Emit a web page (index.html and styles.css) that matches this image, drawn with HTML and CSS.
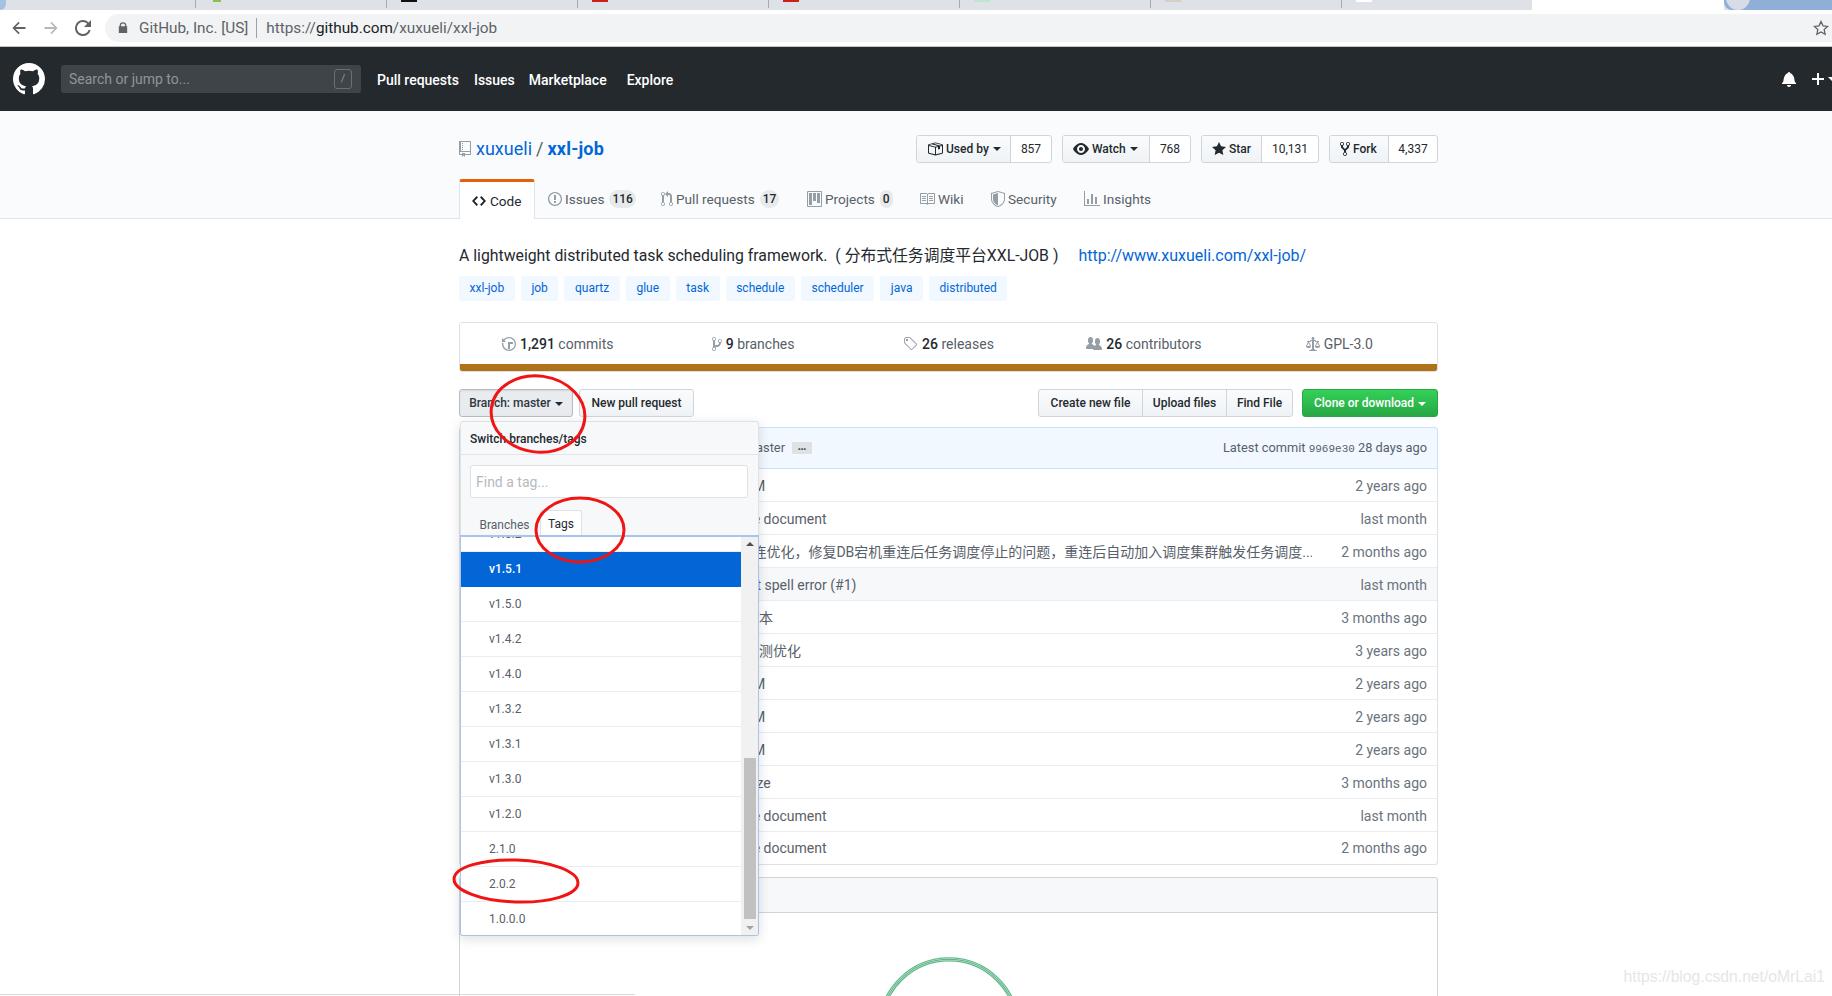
FILE: index.html
```html
<!DOCTYPE html>
<html lang="en">
<head>
<meta charset="utf-8">
<title>xuxueli/xxl-job</title>
<link rel="stylesheet" href="styles.css">
</head>
<body>
<div class="tabstrip">
  <span class="corner"></span>
  <span class="ctab t1"></span>
  <span class="ctab t2"><i class="fav green"></i></span>
  <span class="ctab t2"><i class="fav black"></i></span>
  <span class="ctab t2"><i class="fav red"></i></span>
  <span class="ctab t2"><i class="fav red"></i></span>
  <span class="ctab t2"><i class="fav mint"></i></span>
  <span class="ctab t2"><i class="fav tan"></i></span>
  <span class="ctab t3"><i class="fav white"></i></span>
  <span class="active-tab"></span>
  <span class="profile"><i class="avatar"></i></span>
</div>
<div class="toolbar">
  <svg class="nav-ico" viewBox="0 0 16 16"><path d="M14.5 7H4.6l4.1-4.1L7.5 1.8 1.4 8l6.1 6.2 1.2-1.1L4.6 9h9.9z"/></svg>
  <svg class="nav-ico off" viewBox="0 0 16 16"><path d="M1.5 7h9.9L7.3 2.9l1.2-1.1L14.6 8l-6.1 6.2-1.2-1.1L11.4 9H1.500z"/></svg>
  <svg class="nav-ico reload" viewBox="0 0 16 16"><path d="M13.6 2.4A7.9 7.900 0 0 0 8 0a8 8 0 1 0 7.700 10h-2.100A6 6 0 1 1 8 2c1.700 0 3.100.7 4.200 1.800L9 7h7V0z"/></svg>
  <div class="omnibox">
    <svg class="lock" viewBox="0 0 12 14"><path d="M10 5V4a4 4 0 0 0-8 0v1H1v8h10V5zM3.500 5V4a2.500 2.500 0 0 1 5 0v1z"/></svg>
    <span class="issuer">GitHub, Inc. [US]</span>
    <span class="omni-sep"></span>
    <span class="url">https://<b>github.com</b>/xuxueli/xxl-job</span>
    <svg class="bookmark" viewBox="0 0 16 16"><path fill="none" stroke="#5f6368" stroke-width="1.300" d="M8 1.500l2 4.300 4.700.6-3.500 3.200.9 4.700L8 12l-4.100 2.300.9-4.700L1.300 6.400 6 5.800z"/></svg>
  </div>
</div>
<header class="ghead">
  <svg class="logo" viewBox="0 0 16 16"><path d="M8 0C3.580 0 0 3.580 0 8c0 3.540 2.290 6.530 5.470 7.590.4.070.55-.17.55-.38 0-.19-.01-.82-.01-1.490-2.010.37-2.530-.49-2.690-.94-.09-.23-.48-.94-.82-1.130-.28-.15-.68-.52-.01-.53.63-.01 1.080.58 1.230.82.72 1.210 1.870.87 2.330.66.07-.52.28-.87.51-1.070-1.780-.2-3.640-.89-3.640-3.950 0-.87.31-1.590.82-2.150-.08-.2-.36-1.020.08-2.120 0 0 .67-.21 2.200.82.64-.18 1.320-.27 2-.27.68 0 1.360.09 2 .27 1.530-1.040 2.200-.82 2.200-.82.44 1.100.16 1.920.08 2.120.51.56.82 1.270.82 2.150 0 3.070-1.870 3.750-3.650 3.950.29.25.54.73.54 1.480 0 1.070-.01 1.930-.01 2.200 0 .21.15.46.55.38A8.013 8.013 0 0016 8c0-4.420-3.580-8-8-8z"/></svg>
  <div class="search"><span>Search or jump to...</span><kbd>/</kbd></div>
  <nav class="gnav">
    <a>Pull requests</a><a>Issues</a><a>Marketplace</a><a>Explore</a>
  </nav>
  <div class="ghead-right">
    <svg class="bell" viewBox="0 0 14 16"><path d="M14 12v1H0v-1l.73-.58c.77-.77.81-2.550 1.190-4.420C2.690 3.230 6 2 6 2c0-.55.45-1 1-1s1 .45 1 1c0 0 3.390 1.230 4.160 5 .38 1.880.42 3.660 1.190 4.420l.66.58H14zm-7 4c1.110 0 2-.89 2-2H5c0 1.110.89 2 2 2z"/></svg>
    <svg class="plus" viewBox="0 0 12 16"><path d="M12 9H7v5H5V9H0V7h5V2h2v5h5v2z"/></svg>
    <i class="caret white-caret"></i>
  </div>
</header>
<section class="pagehead">
  <div class="wrap">
    <div class="repo-row">
      <h1 class="repo-title">
        <svg class="ico repo-ico" viewBox="0 0 12 16"><path d="M4 9H3V8h1v1zm0-3H3v1h1V6zm0-2H3v1h1V4zm0-2H3v1h1V2zm8-1v12c0 .55-.45 1-1 1H6v2l-1.500-1.500L3 16v-2H1c-.55 0-1-.45-1-1V1c0-.55.45-1 1-1h10c.55 0 1 .45 1 1zm-1 10H1v2h2v-1h3v1h5v-2zm0-10H2v9h9V1z"/></svg>
        <a>xuxueli</a><span class="slash">/</span><a class="strong">xxl-job</a>
      </h1>
      <ul class="actions">
        <li class="act a-used"><span class="act-btn"><svg class="ico dark" viewBox="0 0 16 16"><path d="M1 4.270v7.470c0 .45.3.84.75.97l6.500 1.730c.16.050.34.050.5 0l6.500-1.730c.45-.13.75-.52.75-.97V4.270c0-.45-.3-.84-.75-.97l-6.500-1.740a1.400 1.400 0 00-.5 0L1.750 3.300c-.45.13-.75.52-.75.97zm7 9.090l-6-1.590V5l6 1.610v6.750zM2 4l2.500-.67L11 5.060l-2.500.67L2 4zm13 7.770l-6 1.590V6.610l2-.55V8.500l2-.53V5.530L15 5v6.770zm-2-7.240L6.500 2.800l2-.53L15 4l-2 .53z"/></svg>Used by<i class="caret"></i></span><span class="act-count">857</span></li>
        <li class="act a-watch"><span class="act-btn"><svg class="ico dark" viewBox="0 0 16 16"><path d="M8.060 2C3 2 0 8 0 8s3 6 8.060 6C13 14 16 8 16 8s-3-6-7.940-6zM8 12c-2.200 0-4-1.780-4-4 0-2.200 1.800-4 4-4 2.220 0 4 1.800 4 4 0 2.220-1.780 4-4 4zm2-4c0 1.110-.89 2-2 2-1.110 0-2-.89-2-2 0-1.110.89-2 2-2 1.110 0 2 .89 2 2z"/></svg>Watch<i class="caret"></i></span><span class="act-count">768</span></li>
        <li class="act a-star"><span class="act-btn"><svg class="ico dark" viewBox="0 0 14 16"><path d="M14 6l-4.900-.64L7 1 4.900 5.360 0 6l3.600 3.260L2.670 14 7 11.670 11.330 14l-.93-4.740L14 6z"/></svg>Star</span><span class="act-count">10,131</span></li>
        <li class="act a-fork"><span class="act-btn"><svg class="ico dark" viewBox="0 0 10 16"><path d="M8 1a1.993 1.993 0 00-1 3.720V6L5 8 3 6V4.720A1.993 1.993 0 002 1a1.993 1.993 0 00-1 3.720V6.500l3 3v1.780A1.993 1.993 0 005 15a1.993 1.993 0 001-3.720V9.500l3-3V4.720A1.993 1.993 0 008 1zM2 4.200C1.340 4.200.8 3.650.8 3c0-.65.55-1.200 1.200-1.200.65 0 1.200.55 1.200 1.200 0 .65-.55 1.200-1.200 1.200zm3 10c-.66 0-1.200-.55-1.200-1.200 0-.65.55-1.200 1.200-1.200.65 0 1.200.55 1.200 1.200 0 .65-.55 1.200-1.200 1.200zm3-10c-.66 0-1.200-.55-1.200-1.200 0-.65.55-1.200 1.200-1.200.65 0 1.200.55 1.200 1.200 0 .65-.55 1.200-1.200 1.200z"/></svg>Fork</span><span class="act-count">4,337</span></li>
      </ul>
    </div>
    <nav class="rtabs">
      <a class="rtab selected"><svg class="ico dark" viewBox="0 0 14 16"><path d="M9.500 3L8 4.500 11.500 8 8 11.500 9.500 13 14 8 9.500 3zm-5 0L0 8l4.500 5L6 11.500 2.500 8 6 4.500 4.500 3z"/></svg>Code</a>
      <a class="rtab w-issues"><svg class="ico" viewBox="0 0 14 16"><path d="M7 2.300c3.140 0 5.700 2.560 5.700 5.700s-2.560 5.700-5.700 5.700A5.710 5.710 0 011.300 8c0-3.140 2.560-5.700 5.700-5.700zM7 1C3.140 1 0 4.140 0 8s3.140 7 7 7 7-3.140 7-7-3.140-7-7-7zm1 3H6v5h2V4zm0 6H6v2h2v-2z"/></svg>Issues<span class="counter">116</span></a>
      <a class="rtab w-pulls"><svg class="ico" viewBox="0 0 12 16"><path d="M11 11.280V5c-.03-.78-.34-1.470-.94-2.060C9.460 2.350 8.780 2.030 8 2H7V0L4 3l3 3V4h1c.27.020.48.11.69.31.21.2.3.42.31.69v6.280A1.993 1.993 0 0010 15a1.993 1.993 0 001-3.720zm-1 2.920c-.66 0-1.200-.55-1.200-1.200 0-.65.55-1.200 1.200-1.200.65 0 1.200.55 1.200 1.200 0 .65-.55 1.200-1.200 1.200zM4 3c0-1.110-.89-2-2-2a1.993 1.993 0 00-1 3.720v6.560A1.993 1.993 0 002 15a1.993 1.993 0 001-3.720V4.720c.59-.34 1-.98 1-1.720zm-.8 10c0 .66-.55 1.200-1.200 1.200-.65 0-1.200-.55-1.200-1.200 0-.65.55-1.200 1.200-1.200.65 0 1.200.55 1.200 1.200zM2 4.200C1.340 4.200.8 3.650.8 3c0-.65.55-1.200 1.200-1.200.65 0 1.200.55 1.200 1.200 0 .65-.55 1.200-1.200 1.200z"/></svg>Pull requests<span class="counter">17</span></a>
      <a class="rtab w-proj"><svg class="ico" viewBox="0 0 15 16"><path fill-rule="evenodd" d="M10 12h3V2h-3v10zm-4-2h3V2H6v8zm-4 4h3V2H2v12zm-1 1h13V1H1v14zM14 0H1a1 1 0 00-1 1v14a1 1 0 001 1h13a1 1 0 001-1V1a1 1 0 00-1-1z"/></svg>Projects<span class="counter">0</span></a>
      <a class="rtab w-wiki"><svg class="ico" viewBox="0 0 16 16"><path d="M3 5h4v1H3V5zm0 3h4V7H3v1zm0 2h4V9H3v1zm11-5h-4v1h4V5zm0 2h-4v1h4V7zm0 2h-4v1h4V9zm2-6v9c0 .55-.45 1-1 1H9.500l-1 1-1-1H2c-.55 0-1-.45-1-1V3c0-.55.45-1 1-1h5.500l1 1 1-1H15c.55 0 1 .45 1 1zm-8 .5L7.500 3H2v9h6V3.500zm7-.5H9.500l-.5.5V12h6V3z"/></svg>Wiki</a>
      <a class="rtab w-sec"><svg class="ico" viewBox="0 0 14 16"><path fill-rule="evenodd" d="M0 2l7-2 7 2v6.020C14 12.690 8.690 16 7 16c-1.690 0-7-3.310-7-7.980V2zm1 .75L7 1l6 1.750v5.268C13 12.104 8.449 15 7 15c-1.449 0-6-2.896-6-6.982V2.750zm1 .75L7 2v12c-1.207 0-5-2.414-5-5.818V3.500z"/></svg>Security</a>
      <a class="rtab"><svg class="ico" viewBox="0 0 16 16"><path d="M16 14v1H0V0h1v14h15zM5 13H3V8h2v5zm4 0H7V3h2v10zm4 0h-2V6h2v7z"/></svg>Insights</a>
    </nav>
  </div>
</section>
<main class="wrap">
  <p class="desc"><span>A lightweight distributed task scheduling framework. &nbsp;(&nbsp;分布式任务调度平台XXL-JOB&nbsp;)</span><a class="homepage">http://www.xuxueli.com/xxl-job/</a></p>
  <div class="topics">
    <a>xxl-job</a><a>job</a><a>quartz</a><a>glue</a><a>task</a><a>schedule</a><a>scheduler</a><a>java</a><a>distributed</a>
  </div>
  <div class="summary">
    <ul class="stats">
      <li><svg class="ico" viewBox="0 0 14 16"><path d="M8 13H6V6h5v2H8v5zM7 1C4.810 1 2.870 2.020 1.590 3.590L0 2v4h4L2.500 4.500C3.550 3.170 5.170 2.300 7 2.300c3.140 0 5.700 2.560 5.700 5.700s-2.560 5.700-5.700 5.700A5.710 5.710 0 011.300 8c0-.34.030-.67.090-1H.08C.030 7.330 0 7.660 0 8c0 3.860 3.140 7 7 7s7-3.140 7-7-3.140-7-7-7z"/></svg><span><b>1,291</b> commits</span></li>
      <li><svg class="ico" viewBox="0 0 10 16"><path d="M10 5c0-1.110-.89-2-2-2a1.993 1.993 0 00-1 3.720v.3c-.020.52-.23.98-.63 1.380-.4.4-.86.61-1.380.63-.83.020-1.480.16-2 .45V4.720a1.993 1.993 0 00-1-3.720C.88 1 0 1.890 0 3a2 2 0 001 1.720v6.560c-.59.35-1 .99-1 1.720 0 1.110.89 2 2 2 1.110 0 2-.89 2-2 0-.53-.2-1-.53-1.360.090-.060.48-.41.59-.47.25-.11.56-.17.94-.17 1.050-.050 1.950-.45 2.750-1.250S8.950 7.770 9 6.730h-.020C9.590 6.370 10 5.730 10 5zM2 1.800c.66 0 1.200.55 1.200 1.200 0 .65-.55 1.200-1.200 1.200C1.350 4.200.8 3.650.8 3c0-.65.55-1.200 1.200-1.200zm0 12.410c-.66 0-1.200-.55-1.200-1.200 0-.65.55-1.200 1.200-1.200.65 0 1.200.55 1.200 1.200 0 .65-.55 1.200-1.200 1.200zm6-8c-.66 0-1.200-.55-1.200-1.200 0-.65.55-1.200 1.200-1.200.65 0 1.200.55 1.200 1.200 0 .65-.55 1.200-1.200 1.200z"/></svg><span><b>9</b> branches</span></li>
      <li><svg class="ico" viewBox="0 0 15 16"><path d="M7.730 1.730C7.260 1.260 6.620 1 5.960 1H3.500C2.130 1 1 2.130 1 3.500v2.470c0 .66.27 1.300.73 1.770l6.060 6.060c.39.39 1.020.39 1.410 0l4.590-4.590a.996.996 0 000-1.410L7.730 1.730zM2.380 7.090c-.31-.3-.47-.7-.47-1.130V3.500c0-.88.72-1.590 1.590-1.590h2.470c.42 0 .83.16 1.130.47l6.140 6.130-4.730 4.730-6.130-6.150zM3.010 3h2v2H3V3h.010z"/></svg><span><b>26</b> releases</span></li>
      <li><svg class="ico" viewBox="0 0 16 16"><path d="M16 12.999c0 .439-.45 1-1 1H7.995c-.539 0-.994-.447-.995-.999H1c-.54 0-1-.561-1-1 0-2.634 3-4 3-4s.229-.409 0-1c-.841-.621-1.058-.59-1-3 .058-2.419 1.367-3 2.500-3s2.442.58 2.500 3c.058 2.410-.159 2.379-1 3-.229.59 0 1 0 1s1.549.711 2.420 2.088C9.196 9.369 10 8.999 10 8.999s.229-.409 0-1c-.841-.62-1.058-.59-1-3 .058-2.419 1.367-3 2.500-3s2.437.581 2.495 3c.059 2.410-.158 2.380-1 3-.229.59 0 1 0 1s3.005 1.366 3.005 4z"/></svg><span><b>26</b> contributors</span></li>
      <li><svg class="ico" viewBox="0 0 14 16"><path d="M7 4c-.83 0-1.500-.67-1.500-1.500S6.170 1 7 1s1.500.67 1.500 1.500S7.830 4 7 4zm7 6c0 1.110-.89 2-2 2h-1c-1.110 0-2-.89-2-2l2-4h-1c-.55 0-1-.45-1-1H8v8c.42 0 1 .45 1 1h1c.42 0 1 .45 1 1H3c0-.55.58-1 1-1h1c0-.55.58-1 1-1h.030L6 5H5c0 .55-.45 1-1 1H3l2 4c0 1.110-.89 2-2 2H2c-1.110 0-2-.89-2-2l2-4H1V5h3c0-.55.45-1 1-1h4c.55 0 1 .45 1 1h3v1h-1l2 4zM2.500 7L1 10h3L2.500 7zM13 10l-1.500-3-1.500 3h3z"/></svg><span>GPL-3.0</span></li>
    </ul>
    <div class="langbar"></div>
  </div>
  <div class="filebar">
    <span class="btn branch-btn">Branch: master<i class="caret"></i></span>
    <span class="btn newpr">New pull request</span>
    <span class="grow"></span>
    <span class="btn-group">
      <span class="btn g1">Create new file</span><span class="btn g2">Upload files</span><span class="btn g3">Find File</span>
    </span>
    <span class="btn clone">Clone or download<i class="caret white-caret"></i></span>
  </div>
  <div class="commit-tease">
    <span class="tease-msg">master</span><span class="hidden-text">…</span>
    <span class="grow"></span>
    <span class="tease-meta">Latest commit <code>9969e30</code> 28 days ago</span>
  </div>
  <div class="files">
    <div class="frow"><span class="fmsg">更 POM</span><span class="fage">2 years ago</span></div>
    <div class="frow"><span class="fmsg">update document</span><span class="fage">last month</span></div>
    <div class="frow"><span class="fmsg">DB 断连优化，修复DB宕机重连后任务调度停止的问题，重连后自动加入调度集群触发任务调度...</span><span class="fage">2 months ago</span></div>
    <div class="frow shade"><span class="fmsg">correct spell error (#1)</span><span class="fage">last month</span></div>
    <div class="frow"><span class="fmsg">更新版本</span><span class="fage">3 months ago</span></div>
    <div class="frow"><span class="fmsg">心跳检测优化</span><span class="fage">3 years ago</span></div>
    <div class="frow"><span class="fmsg">更 POM</span><span class="fage">2 years ago</span></div>
    <div class="frow"><span class="fmsg">更 POM</span><span class="fage">2 years ago</span></div>
    <div class="frow"><span class="fmsg">更 POM</span><span class="fage">2 years ago</span></div>
    <div class="frow"><span class="fmsg">optimize</span><span class="fage">3 months ago</span></div>
    <div class="frow"><span class="fmsg">update document</span><span class="fage">last month</span></div>
    <div class="frow"><span class="fmsg">update document</span><span class="fage">2 months ago</span></div>
  </div>
  <div class="readme">
    <div class="readme-head"></div>
    <div class="readme-body">
      <svg class="readme-logo" viewBox="0 0 150 150"><circle cx="75" cy="75" r="72"/><circle cx="75" cy="75" r="70.500"/><circle cx="75" cy="75" r="69"/></svg>
    </div>
  </div>
</main>

<div class="dropdown">
  <div class="dd-head">Switch branches/tags</div>
  <div class="dd-filter"><span class="dd-input">Find a tag...</span></div>
  <div class="dd-tabs"><span class="dd-tab">Branches</span><span class="dd-tab on">Tags</span></div>
  <div class="dd-list">
    <div class="dd-rows">
      <div class="dd-row first">v1.5.2</div>
      <div class="dd-row sel">v1.5.1</div>
      <div class="dd-row">v1.5.0</div>
      <div class="dd-row">v1.4.2</div>
      <div class="dd-row">v1.4.0</div>
      <div class="dd-row">v1.3.2</div>
      <div class="dd-row">v1.3.1</div>
      <div class="dd-row">v1.3.0</div>
      <div class="dd-row">v1.2.0</div>
      <div class="dd-row">2.1.0</div>
      <div class="dd-row">2.0.2</div>
      <div class="dd-row">1.0.0.0</div>
    </div>
    <div class="scrollbar"><i class="arrow up"></i><i class="thumb"></i><i class="arrow down"></i></div>
  </div>
</div>

<svg class="marks" viewBox="0 0 1832 996">
  <ellipse cx="538" cy="414" rx="47" ry="38" transform="rotate(8 538 414)"/>
  <ellipse cx="580" cy="530" rx="44" ry="32"/>
  <ellipse cx="516" cy="881" rx="62" ry="21" transform="rotate(2 516 881)"/>
</svg>
<div class="page-rule"></div>
<div class="watermark">https://blog.csdn.net/oMrLai1</div>
</body>
</html>
```
FILE: styles.css
```css
* { box-sizing: border-box; }
html, body { margin: 0; height: 996px; overflow: hidden; }
body {
  background: #fff;
  color: #24292e;
  font: 14px/20px Roboto, "Noto Sans CJK SC", sans-serif;
  position: relative;
}
a { color: #0366d6; text-decoration: none; }
ul { list-style: none; margin: 0; padding: 0; }
.grow { flex: 1; }

/* browser chrome */
.tabstrip { height: 10px; background: #dee1e6; display: flex; overflow: hidden; }
.corner { width: 6px; background: #a6c1e0; border-bottom-right-radius: 6px; }
.ctab { height: 8px; border-right: 1px solid #a8abb0; position: relative; }
.t1 { width: 190px; }
.t2 { width: 191px; }
.t3 { width: 190px; border-right: 0; }
.fav { position: absolute; top: 0; left: 14px; width: 16px; height: 2px; }
.green { background: #8bc34a; left: 17px; width: 8px; }
.black { background: #111; }
.red { background: #c9201c; }
.mint { background: #bfe3d4; }
.tan { background: #d8cfc4; }
.white { background: #fff; }
.active-tab { width: 192px; background: #fff; }
.profile { flex: 1; background: #8fb0d6; border-bottom-left-radius: 8px; position: relative; overflow: hidden; }
.avatar { position: absolute; left: 2px; top: -14px; width: 24px; height: 24px; border-radius: 50%; background: #d7dde6; }
.toolbar {
  height: 37px;
  background: #fff;
  border-bottom: 1px solid #c4c4c4;
  display: flex;
  align-items: center;
  padding: 0 0 1px 11px;
}
.nav-ico { width: 16px; height: 16px; margin-right: 16px; fill: #5f6368; flex: none; }
.nav-ico.off { fill: #b5b8bc; }
.nav-ico.reload { margin-right: 14px; }
.omnibox {
  flex: 1;
  height: 28px;
  padding-left: 13px;
  background: #f1f3f4;
  border-radius: 14px 0 0 14px;
  display: flex;
  align-items: center;
  color: #5f6368;
  font-size: 15.3px;
}
.lock { width: 10px; height: 12px; fill: #5f6368; margin-right: 11px; flex: none; }
.omni-sep { width: 1px; height: 20px; background: #9aa0a6; margin: 0 9px 0 8px; }
.url b { color: #202124; font-weight: 400; }
.bookmark { width: 16px; height: 16px; margin-left: auto; margin-right: 3px; }

/* github header */
.ghead { height: 64px; background: #24292e; display: flex; align-items: center; padding-left: 13px; overflow: hidden; }
.logo { width: 32px; height: 32px; fill: #fff; flex: none; }
.search {
  width: 300px;
  height: 28px;
  margin-left: 16px;
  padding: 0 9px 0 8px;
  background: #3f4448;
  border-radius: 3px;
  color: #90959a;
  display: flex;
  align-items: center;
  justify-content: space-between;
}
.search kbd {
  width: 18px;
  height: 20px;
  border: 1px solid #6a6f73;
  border-radius: 3px;
  font: 11px/18px Roboto, sans-serif;
  text-align: center;
  color: #90959a;
}
.gnav { display: flex; margin-left: 16px; padding-top: 2px; }
.gnav a { color: #fff; font-weight: 500; margin-right: 15px; white-space: nowrap; }
.gnav a:nth-child(2) { margin-right: 14px; }
.gnav a:nth-child(3) { margin-right: 20px; }
.ghead-right { margin-left: auto; margin-right: -4px; display: flex; align-items: center; flex: none; }
.bell { width: 14px; height: 16px; fill: #fff; margin-right: 16px; }
.plus { width: 12px; height: 16px; fill: #fff; }

/* carets */
.caret {
  display: inline-block;
  width: 0;
  height: 0;
  margin-left: 4px;
  border: 4px solid transparent;
  border-top-color: #24292e;
  border-bottom: 0;
  vertical-align: middle;
}
.white-caret { border-top-color: #fff; }

/* repo head */
.wrap { width: 979px; margin-left: 459px; }
.pagehead { height: 108px; background: #fafbfc; border-bottom: 1px solid #e1e4e8; }
.repo-row { height: 68px; padding-top: 24px; display: flex; justify-content: space-between; align-items: flex-start; }
.repo-title { margin: 0; font-size: 18px; font-weight: 400; line-height: 28px; display: flex; align-items: center; }
.repo-title .strong { font-weight: 700; letter-spacing: .2px; }
.slash { color: #586069; margin: 0 4px; }
.ico { fill: #959da5; height: 16px; flex: none; }
.ico.dark { fill: #24292e; }
.repo-ico { width: 12px; margin-right: 5px; }
.actions { display: flex; gap: 10px; }
.act {
  display: flex;
  height: 28px;
  border: 1px solid #d1d5da;
  border-radius: 3px;
  font-size: 12px;
  line-height: 26px;
  font-weight: 500;
  background: #fff;
}
.act-btn {
  display: flex;
  align-items: center;
  gap: 3px;
  padding-left: 10px;
  background: linear-gradient(#fafbfc, #eff3f6);
  border-right: 1px solid #d1d5da;
  border-radius: 2px 0 0 2px;
}
.act-btn .caret { margin-left: 1px; }
.act-btn .ico { width: auto; }
.act-count { flex: 1; text-align: center; font-weight: 400; }
.a-used { width: 136px; } .a-used .act-btn { width: 94px; }
.a-watch { width: 129px; } .a-watch .act-btn { width: 87px; }
.a-star { width: 118px; } .a-star .act-btn { width: 60px; }
.a-fork { width: 109px; } .a-fork .act-btn { width: 59px; }

.rtabs { display: flex; height: 39px; }
.rtab {
  display: flex;
  align-items: center;
  gap: 3px;
  height: 39px;
  color: #586069;
  font-size: 13.6px;
  padding: 1px 0 0 13px;
  margin-right: 11px;
  white-space: nowrap;
}
.rtab .ico { width: auto; }
.rtab.selected {
  width: 76px;
  gap: 4px;
  color: #24292e;
  background: #fff;
  border: 1px solid #e1e4e8;
  border-top: 3px solid #e36209;
  border-bottom: 0;
  border-radius: 3px 3px 0 0;
  margin-right: 0;
  padding: 0 0 0 12px;
  height: 40px;
}
.counter {
  margin-left: 2px;
  padding: 0 3px;
  font-size: 12px;
  font-weight: 500;
  line-height: 18px;
  text-align: center;
  background: rgba(27,31,35,.08);
  border-radius: 20px;
  color: #24292e;
}
.w-issues { width: 102px; }
.w-pulls { width: 135px; }
.w-proj { width: 101px; }
.w-wiki { width: 61px; }
.w-sec { width: 82px; }

/* main */
.desc { margin: 0; padding-top: 26px; font-size: 15.8px; line-height: 22px; height: 57px; display: flex; white-space: nowrap; }
.homepage { margin-left: 20px; font-size: 16px; }
.topics { display: flex; gap: 6px; height: 25px; }
.topics a {
  padding: 0 10.6px;
  font-size: 12px;
  line-height: 25px;
  background: #f1f8ff;
  border-radius: 3px;
}
.summary {
  margin-top: 21px;
  height: 50px;
  border: 1px solid #dfe2e5;
  border-radius: 3px;
  overflow: hidden;
}
.stats { display: grid; grid-template-columns: repeat(5, 1fr); height: 41px; }
.stats li {
  display: flex;
  align-items: center;
  justify-content: center;
  gap: 4px;
  color: #586069;
  white-space: nowrap;
}
.stats b { color: #24292e; font-weight: 500; }
.stats .ico { width: auto; }
.langbar { height: 8px; background: #b07219; }

.filebar { display: flex; margin-top: 17px; height: 28px; }
.btn {
  height: 28px;
  padding: 0 10px;
  border: 1px solid #d1d5da;
  border-radius: 3px;
  background: linear-gradient(#fafbfc, #eff3f6);
  font-size: 12px;
  font-weight: 500;
  line-height: 26px;
  text-align: center;
  white-space: nowrap;
}
.branch-btn { width: 114px; padding: 0; background: #e9ecef; border-color: #b9bdc2; color: #2f363d; box-shadow: inset 0 1px 2px rgba(27,31,35,.1); }
.newpr { width: 115px; padding: 0; margin-left: 6px; }
.btn-group { display: flex; margin-right: 9px; }
.g1 { width: 105px; padding: 0; border-radius: 3px 0 0 3px; }
.g2 { width: 85px; padding: 0; border-radius: 0; margin-left: -1px; }
.g3 { width: 67px; padding: 0; border-radius: 0 3px 3px 0; margin-left: -1px; }
.clone { width: 136px; padding: 0; color: #fff; background: linear-gradient(#34d058, #28a745); border-color: #28a745; }

.commit-tease {
  margin-top: 10px;
  height: 42px;
  display: flex;
  align-items: center;
  padding: 0 10px 0 0;
  background: #f1f8ff;
  border: 1px solid #c8e1ff;
  border-radius: 3px 3px 0 0;
  font-size: 12.8px;
  color: #586069;
}
.tease-msg { width: 325px; text-align: right; white-space: nowrap; }
.hidden-text {
  width: 20px;
  height: 12px;
  margin-left: 7px;
  background: #dfe2e5;
  border-radius: 1px;
  font-size: 12px;
  line-height: 8px;
  font-weight: 700;
  text-align: center;
  color: #444d56;
}
.tease-meta { white-space: nowrap; }
.tease-meta code { font: 11px "Liberation Mono", monospace; }
.files { border: 1px solid #dfe2e5; border-top: 0; border-radius: 0 0 3px 3px; }
.frow {
  display: flex;
  align-items: center;
  height: 33px;
  padding: 1px 10px 0 257px;
  border-bottom: 1px solid #eaecef;
  white-space: nowrap;
}
.frow:last-child { border-bottom-color: transparent; height: 32px; }
.frow.shade { background: #f6f8fa; }
.fmsg { width: 595px; flex: none; color: #586069; overflow: hidden; }
.fage { margin-left: auto; color: #6a737d; }
.readme { margin-top: 12px; border: 1px solid #d1d5da; border-bottom: 0; border-radius: 3px 3px 0 0; height: 119px; overflow: hidden; }
.readme-head { height: 35px; background: #f6f8fa; border-bottom: 1px solid #d1d5da; }
.readme-body { padding-top: 42px; display: flex; justify-content: center; }
.readme-logo { width: 146px; height: 146px; flex: none; }
.readme-logo circle { fill: none; stroke: #62b88c; stroke-width: 1.2; }

/* branch dropdown */
.dropdown {
  position: absolute;
  left: 460px;
  top: 421px;
  width: 299px;
  height: 515px;
  background: #f6f8fa;
  border: 1px solid #dfe2e5;
  border-radius: 3px;
  box-shadow: 0 3px 12px rgba(27,31,35,.15);
  font-size: 12px;
  display: flex;
  flex-direction: column;
}
.dd-head { height: 33px; padding: 0 9px; line-height: 34px; font-weight: 500; border-bottom: 1px solid #e1e4e8; flex: none; }
.dd-filter { height: 55px; padding: 10px 10px 0 9px; flex: none; }
.dd-input {
  display: block;
  height: 33px;
  padding: 0 5px;
  background: #fff;
  border: 1px solid #dfe2e5;
  border-radius: 3px;
  font-size: 14px;
  line-height: 32px;
  color: #b5babf;
}
.dd-tabs { height: 25px; padding-left: 8px; display: flex; flex: none; }
.dd-tab { width: 71px; height: 25px; padding-top: 5px; line-height: 20px; text-align: center; color: #586069; }
.dd-tab.on { width: 42px; padding-top: 3px; background: #fff; color: #24292e; border: 1px solid #dfe2e5; border-bottom: 0; border-radius: 3px 3px 0 0; }
.dd-list {
  flex: 1;
  display: flex;
  min-height: 0;
  overflow: hidden;
  background: #fff;
  border: 1px solid #a9c4ec;
  border-top-width: 2px;
  margin: 0 -1px -1px;
  border-radius: 0 0 3px 3px;
}
.dd-rows { width: 280px; flex: none; }
.dd-row {
  height: 35px;
  padding-left: 28px;
  line-height: 34px;
  color: #586069;
  border-bottom: 1px solid #eaecef;
}
.dd-row.first { margin-top: -20px; }
.dd-row.sel { background: #0366d6; color: #fff; border-bottom-color: #0366d6; font-weight: 500; }
.dd-row:last-child { border-bottom: 0; }
.scrollbar { flex: 1; background: #f1f1f1; position: relative; }
.thumb { position: absolute; left: 3px; right: 2px; top: 221px; height: 161px; background: #c1c1c1; }
.arrow { position: absolute; left: 5px; width: 0; height: 0; border: 4px solid transparent; }
.arrow.up { top: 5px; border-bottom-color: #505050; border-top: 0; }
.arrow.down { bottom: 5px; border-top-color: #a3a3a3; border-bottom: 0; }

/* hand drawn marks over the page */
.marks { position: absolute; left: 0; top: 0; width: 1832px; height: 996px; pointer-events: none; }
.marks ellipse { fill: none; stroke: #f01414; stroke-width: 3; }
.page-rule { position: absolute; left: 0; top: 994px; width: 635px; height: 1px; background: #d9d9d9; }
.watermark {
  position: absolute;
  right: 7px;
  top: 966px;
  font: 15.7px/22px "Liberation Sans", sans-serif;
  color: #e6e6e6;
  white-space: nowrap;
}
```
